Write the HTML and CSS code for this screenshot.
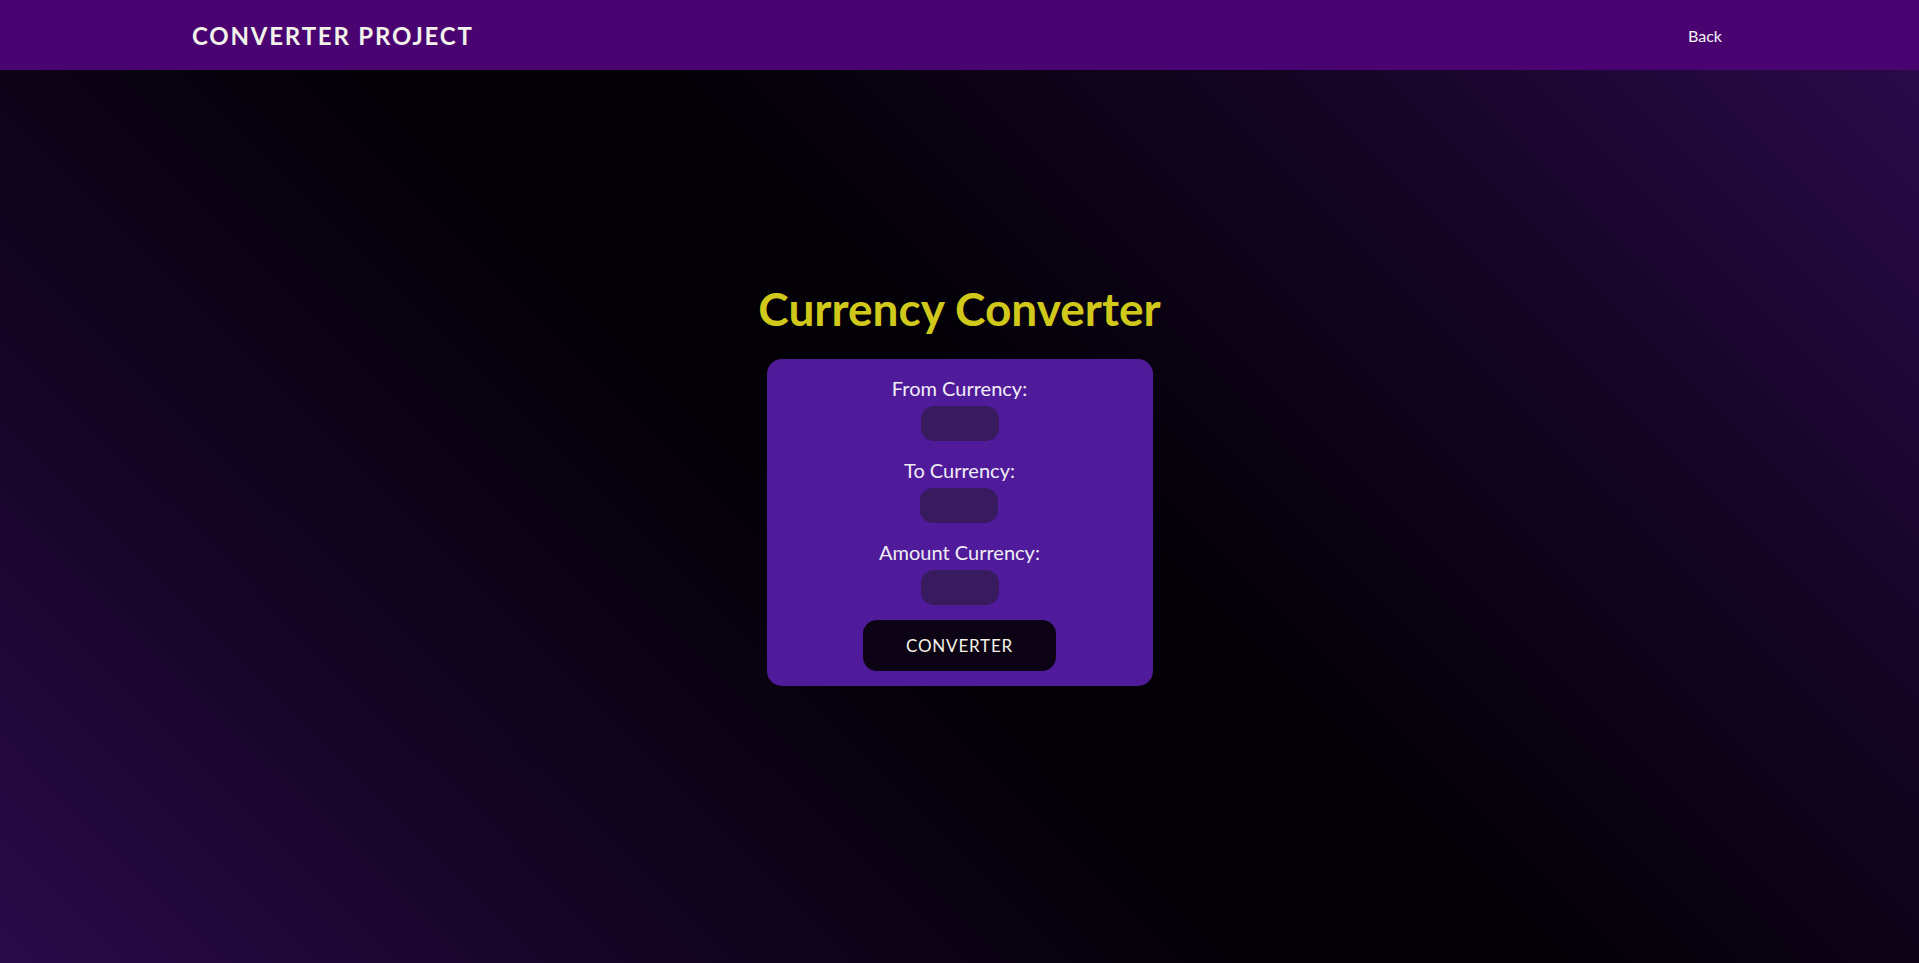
FILE: index.html
```html
<!DOCTYPE html>
<html lang="en">
<head>
<meta charset="utf-8">
<title>Converter Project</title>
<link rel="stylesheet" href="styles.css">
</head>
<body>
<header class="topbar">
  <div class="brand">CONVERTER PROJECT</div>
  <a class="back" href="#">Back</a>
</header>
<main class="stage">
  <h1 class="title">Currency Converter</h1>
  <form class="card">
    <div class="field">
      <label class="label">From Currency:</label>
      <input class="input" type="text">
    </div>
    <div class="field">
      <label class="label">To Currency:</label>
      <input class="input" type="text">
    </div>
    <div class="field">
      <label class="label">Amount Currency:</label>
      <input class="input" type="text">
    </div>
    <button class="btn" type="button">CONVERTER</button>
  </form>
</main>
</body>
</html>
```

FILE: styles.css
```css
* { box-sizing: border-box; }
html, body { margin: 0; padding: 0; height: 100%; }
body {
  font-family: Lato, "Open Sans", sans-serif;
  background: #050008;
  display: flex;
  flex-direction: column;
  min-height: 963px;
}
.topbar {
  height: 70px;
  flex: 0 0 70px;
  background: #4a0472;
  display: flex;
  align-items: center;
  justify-content: space-between;
  padding: 0 197px 0 192px;
}
.brand {
  color: #f2f2ea;
  font-weight: 700;
  font-size: 24px;
  letter-spacing: 1.8px;
}
.back {
  color: #f4f4f4;
  text-decoration: none;
  font-size: 16px;
  margin-top: 0;
}
.stage {
  flex: 1;
  background: linear-gradient(45deg, #2a0a4a 0%, #120420 25%, #030006 45%, #030006 55%, #120420 75%, #2a0a4a 100%);
  display: flex;
  flex-direction: column;
  align-items: center;
  padding-top: 213px;
}
.title {
  margin: 0;
  color: #d0c81a;
  font-size: 46px;
  font-weight: 700;
  line-height: 52px;
}
.card {
  margin-top: 24px;
  width: 386px;
  background: #501b9b;
  border-radius: 15px;
  padding: 18px 0 15px;
  display: flex;
  flex-direction: column;
  align-items: center;
}
.field {
  display: flex;
  flex-direction: column;
  align-items: center;
  margin-bottom: 18px;
}
.field:nth-child(3) { margin-bottom: 15px; }
.label {
  color: #f0eef5;
  font-size: 20px;
  line-height: 22px;
  margin-bottom: 7px;
}
.input {
  width: 78px;
  height: 35px;
  border: none;
  border-radius: 13px;
  background: #381a5e;
  outline: none;
}
.btn {
  width: 193px;
  height: 51px;
  border: none;
  border-radius: 14px;
  background: #0c0414;
  color: #f4f2e6;
  font-family: Lato, "Open Sans", sans-serif;
  font-size: 17px;
  letter-spacing: 0.8px;
}
```
